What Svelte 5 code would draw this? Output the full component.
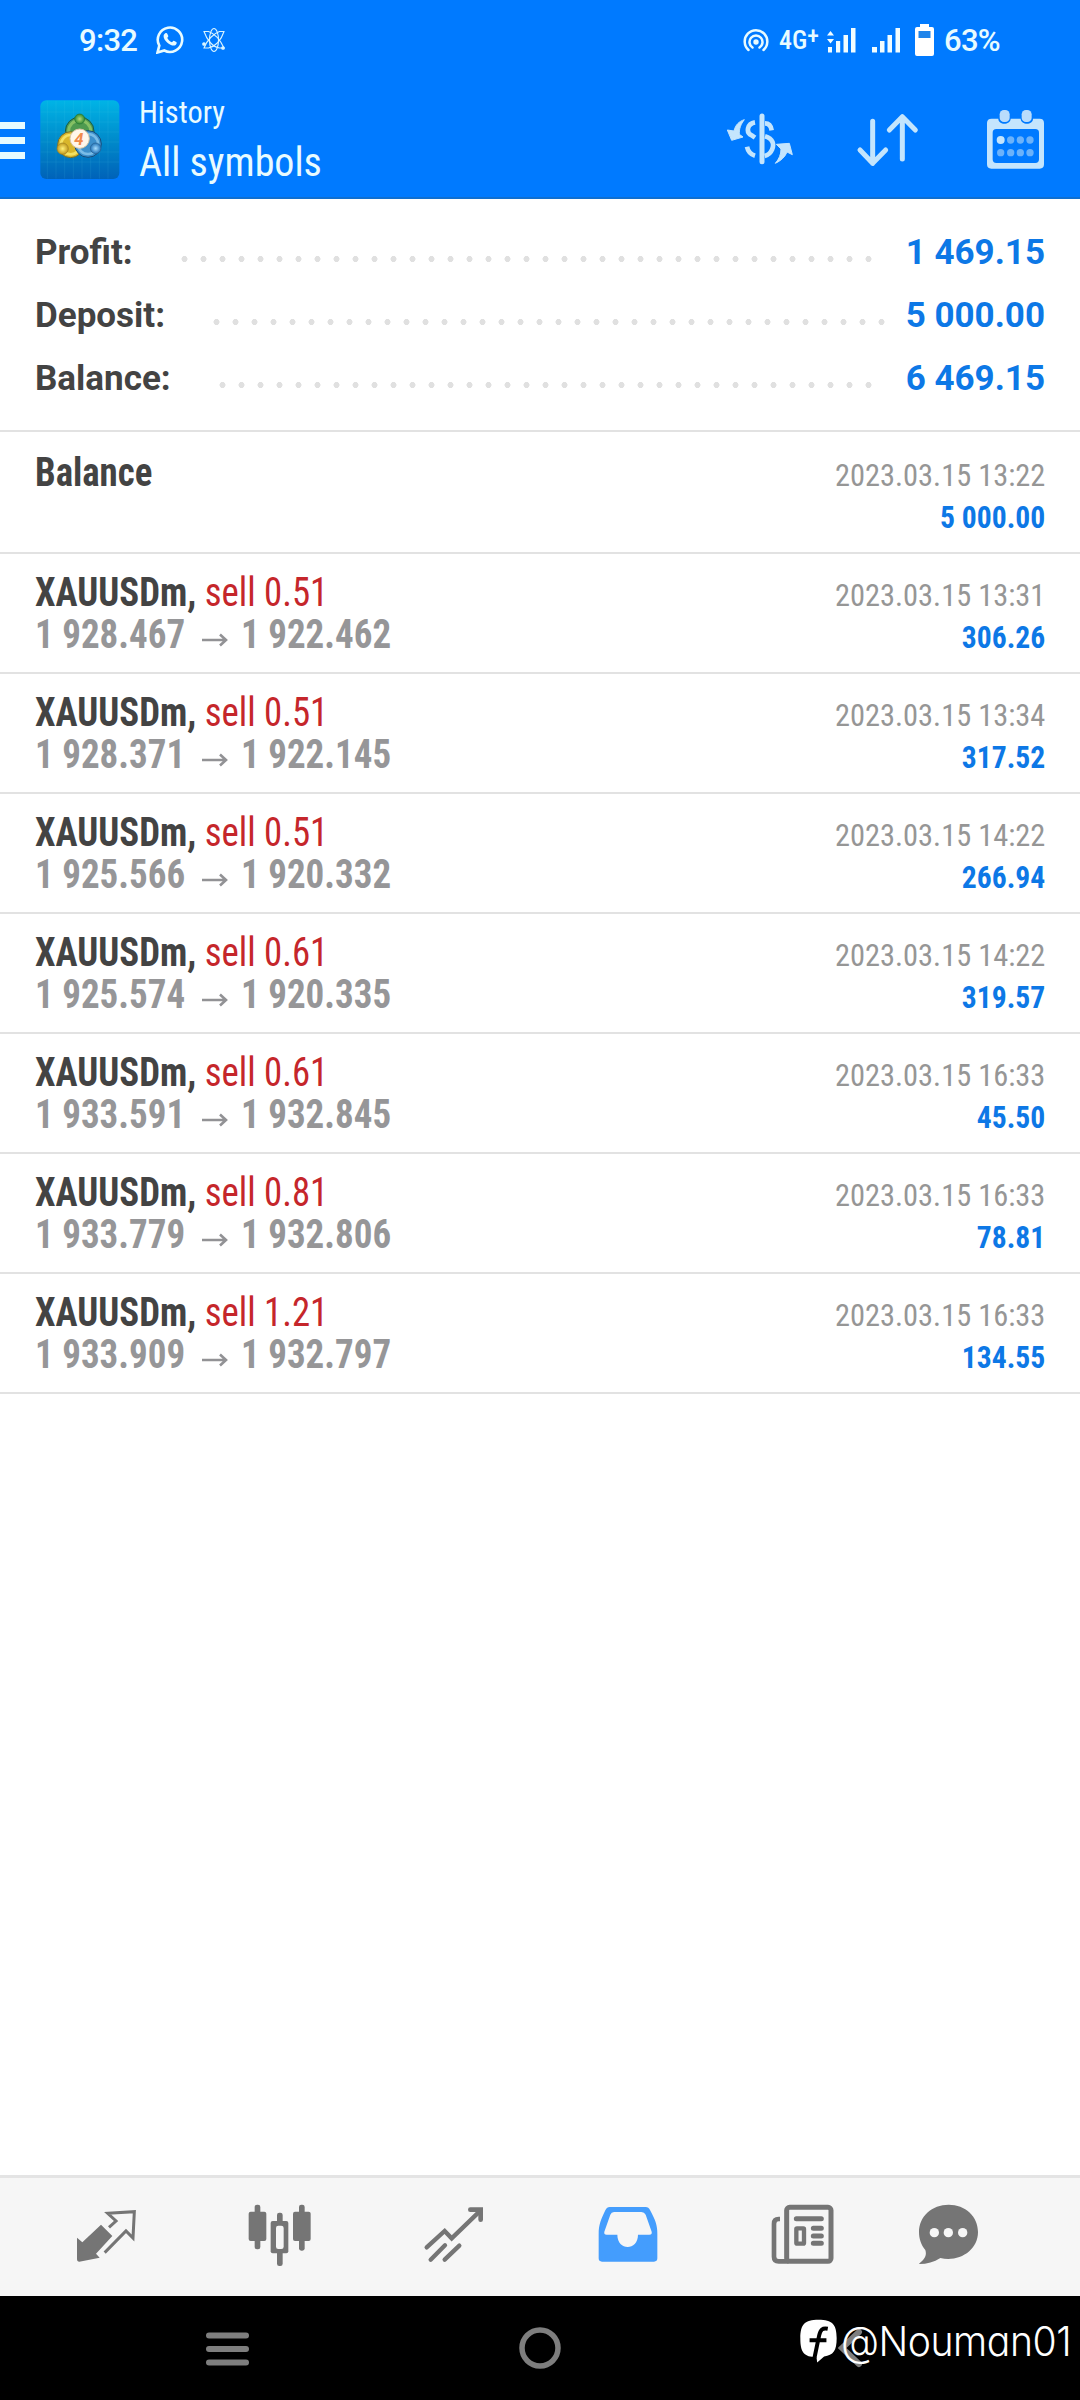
<script>
	const summary = [
		{ label: 'Profit:', value: '1 469.15', dots: 37 },
		{ label: 'Deposit:', value: '5 000.00', dots: 36 },
		{ label: 'Balance:', value: '6 469.15', dots: 35 },
	];

	const deals = [
		{ volume: '0.51', open: '1 928.467', close: '1 922.462', time: '2023.03.15 13:31', profit: '306.26' },
		{ volume: '0.51', open: '1 928.371', close: '1 922.145', time: '2023.03.15 13:34', profit: '317.52' },
		{ volume: '0.51', open: '1 925.566', close: '1 920.332', time: '2023.03.15 14:22', profit: '266.94' },
		{ volume: '0.61', open: '1 925.574', close: '1 920.335', time: '2023.03.15 14:22', profit: '319.57' },
		{ volume: '0.61', open: '1 933.591', close: '1 932.845', time: '2023.03.15 16:33', profit: '45.50' },
		{ volume: '0.81', open: '1 933.779', close: '1 932.806', time: '2023.03.15 16:33', profit: '78.81' },
		{ volume: '1.21', open: '1 933.909', close: '1 932.797', time: '2023.03.15 16:33', profit: '134.55' },
	];
</script>

<div class="screen">
	<header>
		<div class="status">
			<div class="status-side">
				<span class="clock">9:32</span>
				<svg class="whatsapp" viewBox="0 0 28 28" width="28" height="28">
					<path d="M1.500 26.500l1.800-6.900A12.200 12.200 0 1 1 8.300 24.500z" fill="none" stroke="#e8fbff" stroke-width="2.600" />
					<path d="M9 7.500c1-.8 2-.6 2.400.4l.9 2.100c.2.700-.9 1.500-1 2 .9 1.900 2.400 3.300 4.500 4.200.6 0 1.300-1.600 2-1.400l2.500 1.200c1 .6.2 2.500-1 3.200-3.500 1.900-11.800-4.200-11.700-9 0-1.200.7-2.200 1.400-2.700z" fill="#e8fbff" />
				</svg>
				<svg class="atom" viewBox="0 0 24 26" width="24" height="26" fill="none" stroke="#d9f4ff" stroke-width="1.100">
					<ellipse cx="12" cy="13" rx="4.500" ry="11.500" />
					<path d="M2 4.500h4.500c6 2 11.500 8 15.500 16.500h-4.500C11 20 5 13.500 2 4.500z" />
					<path d="M22 4.500h-4.500C11.500 6.500 5 13 2 21h4.500C13 19.500 19 13.500 22 4.500z" />
					<circle cx="2" cy="17" r="1.300" fill="#d9f4ff" />
					<circle cx="21" cy="21" r="1.300" fill="#d9f4ff" />
				</svg>
			</div>
			<div class="status-side">
				<svg viewBox="0 0 26 24" width="26" height="24" fill="none" stroke="#e8fbff" stroke-width="2.500" stroke-linecap="round">
					<circle cx="13" cy="14" r="2.700" fill="#e8fbff" stroke="none" />
					<path d="M9.500 19.500a6.500 6.500 0 1 1 7 0M5.500 22a11.300 11.300 0 1 1 15 0" />
				</svg>
				<span class="network">4G<sup>+</sup></span>
				<svg class="signal" viewBox="0 0 30 26" width="30" height="26" fill="#f2fdff">
					<path d="M1 8.500L4.500 4 8 8.500zM1 12h7l-3.500 4.500zM2 20h4v5.500H2zM10 14h4.200v11.500H10zM17.500 8h4.500v17.500h-4.500zM25 1h4.500v24.500H25z" />
				</svg>
				<svg class="signal-two" viewBox="0 0 30 26" width="30" height="26" fill="#f2fdff">
					<path d="M1 20h5v5.500H1zM9 14h4.500v11.500H9zM16.500 8H21v17.500h-4.500zM24.500 1H29v24.500h-4.500z" />
				</svg>
				<svg class="battery" viewBox="0 0 19 32" width="19" height="32">
					<path d="M5 0h9v3h3a2 2 0 0 1 2 2v25a2 2 0 0 1-2 2H2a2 2 0 0 1-2-2V5a2 2 0 0 1 2-2h3z" fill="#fff" />
					<path d="M3.500 7h12v7h-12z" fill="#1f84ea" />
				</svg>
				<span class="percent">63%</span>
			</div>
		</div>

		<div class="app-bar">
			<svg class="menu" viewBox="0 0 25 38" width="25" height="38" fill="#e6fbff">
				<path d="M0 0h25v7H0zM0 15h25v7H0zM0 30h25v7H0z" />
			</svg>
			<!-- app logo, three coins round the version number -->
			<svg class="logo" viewBox="0 0 240 240" width="80" height="80">
				<defs>
					<linearGradient id="sky" x1="0" y1="0" x2="0" y2="1">
						<stop offset="0" stop-color="#00b4e6" />
						<stop offset="0.5" stop-color="#008bcb" />
						<stop offset="1" stop-color="#0062b8" />
					</linearGradient>
					<radialGradient id="green"><stop offset="0" stop-color="#b9dc78" /><stop offset="1" stop-color="#2f8a35" /></radialGradient>
					<radialGradient id="gold"><stop offset="0" stop-color="#fff07a" /><stop offset="1" stop-color="#c39a1c" /></radialGradient>
					<radialGradient id="blue"><stop offset="0" stop-color="#a5dcff" /><stop offset="1" stop-color="#2273b8" /></radialGradient>
				</defs>
				<rect x="1" y="1" width="237" height="236" rx="18" fill="url(#sky)" />
				<path d="M22 2v234M48 2v234M74 2v234M100 2v234M126 2v234M152 2v234M178 2v234M204 2v234M2 36h236M2 66h236M2 96h236M2 126h236M2 156h236M2 186h236" stroke="#5bd5ef" stroke-opacity="0.160" stroke-width="2" />
				<circle cx="119" cy="94" r="43" fill="#4f9a50" stroke="#155b4a" stroke-width="3" />
				<circle cx="119" cy="94" r="33" fill="none" stroke="#86c064" stroke-width="9" />
				<circle cx="92" cy="134" r="39" fill="#d9b62b" stroke="#736d2b" stroke-width="3" />
				<circle cx="92" cy="134" r="29" fill="none" stroke="#f4e162" stroke-width="8" />
				<circle cx="144" cy="132" r="40" fill="#3d90cc" stroke="#154c7b" stroke-width="3" />
				<circle cx="144" cy="132" r="30" fill="none" stroke="#7abce7" stroke-width="8" />
				<circle cx="119" cy="57" r="15" fill="url(#green)" stroke="#257536" stroke-width="2" />
				<circle cx="68" cy="146" r="17" fill="url(#gold)" stroke="#9c7e25" stroke-width="2" />
				<circle cx="167" cy="145" r="16" fill="url(#blue)" stroke="#285f90" stroke-width="2" />
				<circle cx="119" cy="116" r="29" fill="#fff6ea" stroke="#d9c6a5" stroke-width="3" />
				<text x="117" y="134" class="version">4</text>
			</svg>
			<div class="titles">
				<div class="title">History</div>
				<div class="subtitle">All symbols</div>
			</div>
			<div class="actions">
				<svg viewBox="80 324 198 180" width="66" height="60" fill="none" stroke="#c4e5fd">
					<path d="M185 345v137" stroke-width="15" stroke-linecap="round" />
					<path d="M164 364c-24 4-28 31-10 39l10 7M194 367c10 0 18 7 20 21M140 437c3 14 11 23 24 27M194 406c25 7 28 25 21 40-4 10-11 16-22 19" stroke-width="14" />
					<path d="M132 356c-16 5-27 16-31 34l-20-3 13 31 34-10-11-8c-1-18 5-31 15-44z" fill="#c4e5fd" stroke-width="3" />
					<path d="M225 487c15-7 29-18 35-34l16 8-9-34-39 3 14 14c0 17-6 30-17 43z" fill="#c4e5fd" stroke-width="3" />
				</svg>
				<svg viewBox="465 324 198 180" width="66" height="60" fill="none" stroke="#c4e5fd" stroke-width="15" stroke-linecap="round" stroke-linejoin="round">
					<path d="M518 361v126M480 447l38 40 39-40M607 474V347M568 387l39-40 39 40" />
				</svg>
				<svg viewBox="850 324 198 180" width="66" height="60">
					<path fill-rule="evenodd" d="M876 353h20c0 20 36 20 37 0h30c1 20 37 20 37 0h20q13 0 13 13v124q0 13-13 13H875q-13 0-13-13V366q0-13 14-13zM890 384q-11 0-11 11v80q0 11 11 11h117q11 0 11-11v-80q0-11-11-11z" fill="#c4e5fd" />
					<rect x="900" y="327" width="30" height="36" rx="13" fill="#b9dcfc" />
					<rect x="966" y="327" width="30" height="36" rx="13" fill="#b9dcfc" />
					<circle cx="903" cy="417" r="12" fill="#c4e5fd" />
					<g fill="#6bb2fa">
						<circle cx="933" cy="417" r="11" /><circle cx="962" cy="417" r="11" /><circle cx="991" cy="417" r="11" />
						<circle cx="903" cy="455" r="11" /><circle cx="933" cy="455" r="11" /><circle cx="962" cy="455" r="11" /><circle cx="991" cy="455" r="11" />
					</g>
				</svg>
			</div>
		</div>
	</header>

	<section class="summary">
		{#each summary as item}
			<div class="summary-row">
				<span class="label">{item.label}</span>
				<span class="dots" style="width: {item.dots * 19}px"></span>
				<span class="total">{item.value}</span>
			</div>
		{/each}
	</section>

	<main>
		<div class="deal deposit">
			<div class="symbol">Balance</div>
			<div class="right">
				<div class="time">2023.03.15 13:22</div>
				<div class="profit">5 000.00</div>
			</div>
		</div>
		{#each deals as deal}
			<div class="deal">
				<div>
					<div class="symbol">XAUUSDm, <span class="sell">sell {deal.volume}</span></div>
					<div class="prices">
						<span class="open">{deal.open}</span>
						<svg viewBox="0 0 26 14" width="26" height="14" fill="none" stroke="#929295" stroke-width="2.600">
							<path d="M0 7h24M18 1.500l6 5.500-6 5.500" />
						</svg>
						<span>{deal.close}</span>
					</div>
				</div>
				<div class="right">
					<div class="time">{deal.time}</div>
					<div class="profit">{deal.profit}</div>
				</div>
			</div>
		{/each}
	</main>

	<nav class="tabs">
		<svg viewBox="219 132 198 192" width="66" height="64">
			<path d="M303 194l34 34-49 53 11 12-61 12q-7 0-7-8v-64l16 14z" fill="#757575" />
			<path d="M327 202l21-19-25-23 80-5-4 79-21-21-64 65" fill="none" stroke="#757575" stroke-width="9" />
		</svg>
		<svg viewBox="741 132 198 192" width="66" height="64" fill="#757575">
			<rect x="764" y="134" width="17" height="134" rx="7" />
			<rect x="746" y="155" width="53" height="88" rx="6" />
			<rect x="897" y="134" width="17" height="138" rx="7" />
			<rect x="879" y="155" width="53" height="88" rx="6" />
			<rect x="831" y="158" width="17" height="160" rx="7" />
			<rect x="812" y="183" width="53" height="97" rx="6" />
			<rect x="828" y="197" width="23" height="70" rx="7" fill="#f6f6f6" />
		</svg>
		<svg viewBox="183 132 198 192" width="66" height="64" fill="none" stroke="#757575" stroke-width="13" stroke-linecap="round">
			<path d="M200 262l54-49 21 22 87-84M212 299l43-43M254 299l44-42" />
			<path d="M331 149h31v30" stroke-width="14" />
		</svg>
		<svg viewBox="705 132 198 192" width="66" height="64">
			<path d="M749 141h108q9 0 13 9c16 30 22 45 22 71v74q0 10-10 10H726q-10 0-10-10v-74c0-26 7-43 20-70q5-10 13-10z" fill="#449dfd" />
			<path d="M762 156h82q9 0 13 8l18 51q2 9-7 9h-34c0 49-62 49-62 0h-32q-9 0-7-9l18-51q3-8 11-8z" fill="#f6f6f6" />
		</svg>
		<svg viewBox="147 132 198 192" width="66" height="64" fill="none" stroke="#757575" stroke-width="15">
			<rect x="200" y="142" width="133" height="162" rx="9" />
			<path d="M180 177h-4q-14 0-14 14v99q0 14 14 14h30" stroke-width="14" />
			<path d="M229 176h75M280 205h24M280 228h24M280 250h24" stroke-linecap="round" />
			<rect x="229" y="205" width="23" height="46" rx="2" stroke-width="13" />
		</svg>
		<svg class="chat" viewBox="588 132 198 192" width="66" height="64">
			<path d="M686 134c50 0 88 35 88 82 0 56-57 91-113 78-19 12-40 18-63 18-3-3 27-15 18-42-13-16-19-33-19-54 0-47 39-82 89-82z" fill="#757575" />
			<circle cx="643" cy="218" r="14" fill="#f6f6f6" />
			<circle cx="685" cy="218" r="14" fill="#f6f6f6" />
			<circle cx="728" cy="218" r="14" fill="#f6f6f6" />
		</svg>
	</nav>

	<footer>
		<svg class="recents" viewBox="0 0 43 34" width="43" height="34" fill="#7e7e7e">
			<rect y="0.500" width="43" height="6" rx="3" />
			<rect y="14" width="43" height="6" rx="3" />
			<rect y="27.500" width="43" height="6" rx="3" />
		</svg>
		<svg class="home" viewBox="0 0 42 42" width="42" height="42">
			<circle cx="21" cy="21" r="18" fill="none" stroke="#7e7e7e" stroke-width="5.500" />
		</svg>
		<svg class="back" viewBox="0 0 26 40" width="26" height="40">
			<path d="M21 4L4 20l17 16" fill="none" stroke="#7e7e7e" stroke-width="6" stroke-linecap="round" />
		</svg>
		<div class="watermark">
			<svg viewBox="240 484 112 132" width="37" height="44">
				<path d="M296 486c42 0 55 14 55 56 0 38-10 51-38 55l-21 18-2-16c-38 0-49-14-49-57 0-42 13-56 55-56z" fill="#fff" />
				<path d="M284 600l14-67c4-18 10-23 26-20M269 548h51" fill="none" stroke="#000" stroke-width="12" />
			</svg>
			<span>@Nouman01</span>
		</div>
	</footer>
</div>

<style>
	:global(body) {
		margin: 0;
		background: #fff;
	}
	.screen {
		width: 1080px;
		height: 2400px;
		display: flex;
		flex-direction: column;
		font-family: Roboto, sans-serif;
		white-space: nowrap;
		overflow: hidden;
	}
	svg {
		display: block;
		flex: none;
	}
	header {
		box-sizing: border-box;
		height: 199px;
		background: #007aff;
		border-bottom: 2px solid #0f6fd0;
		color: #e8fbff;
	}
	.status {
		height: 80px;
		padding: 0 81px 0 79px;
		display: flex;
		justify-content: space-between;
		font-size: 31px;
		font-weight: 500;
		letter-spacing: -0.700px;
	}
	.status-side {
		display: flex;
		align-items: center;
	}
	.clock {
		width: 77px;
	}
	.atom {
		margin-left: 18px;
	}
	.network {
		width: 41px;
		margin-left: 10px;
		font-size: 26px;
		font-stretch: 75%;
		letter-spacing: 0;
	}
	.network sup {
		font-size: 24px;
		line-height: 0;
		vertical-align: 5px;
	}
	.signal {
		margin-left: 6px;
	}
	.signal-two {
		margin-left: 15px;
	}
	.battery {
		margin-left: 14px;
	}
	.percent {
		width: 55px;
		margin-left: 10px;
	}
	.app-bar {
		height: 117px;
		display: flex;
		align-items: center;
	}
	.menu {
		margin-top: 4px;
	}
	.logo {
		margin: 3px 19px 0 15px;
	}
	.version {
		font: italic 700 50px Roboto, sans-serif;
		fill: #f08a4b;
		text-anchor: middle;
	}
	.titles {
		font-stretch: 75%;
	}
	.title {
		font-size: 32px;
		line-height: 44px;
		transform: scaleX(0.95);
		transform-origin: left;
	}
	.subtitle {
		margin-top: 4px;
		font-size: 40px;
		line-height: 50px;
	}
	.actions {
		margin-left: auto;
		padding-right: 31px;
		display: flex;
		gap: 62px;
	}
	.summary {
		padding: 22px 35px 20px;
		border-bottom: 2px solid #e2e2e2;
	}
	.summary-row {
		height: 63px;
		display: flex;
		font-size: 35px;
		line-height: 63px;
		font-weight: 700;
	}
	.label {
		color: #434343;
	}
	.dots {
		height: 6px;
		margin: 35px 0 0 42px;
		background: radial-gradient(circle, #e0e0e0 2.700px, transparent 3.300px) 0 0 / 19px 6px repeat-x;
	}
	.total {
		margin-left: auto;
		color: #0d78e6;
	}
	.deal {
		box-sizing: border-box;
		height: 120px;
		padding: 18px 35px 0;
		border-bottom: 2px solid #e2e2e2;
		display: flex;
		justify-content: space-between;
		font-stretch: 75%;
	}
	.deposit {
		height: 122px;
		padding-top: 20px;
	}
	/* the list face is a little narrower than Roboto at 75% */
	.symbol {
		font-size: 40px;
		line-height: 42px;
		font-weight: 700;
		color: #434343;
		transform: scaleX(0.92);
		transform-origin: left;
	}
	.sell {
		font-weight: 400;
		color: #c5262b;
	}
	.prices {
		display: flex;
		align-items: center;
		font-size: 40px;
		line-height: 42px;
		font-weight: 700;
		color: #969698;
	}
	.prices span {
		transform: scaleX(0.925);
		transform-origin: left;
	}
	.open {
		width: 167px;
	}
	.prices svg {
		margin: 10px 13px 0 0;
	}
	.right {
		padding-top: 2px;
		text-align: right;
		font-size: 32px;
		line-height: 42px;
	}
	.time {
		color: #969696;
		transform: scaleX(0.95);
		transform-origin: right;
	}
	.profit {
		font-weight: 700;
		color: #0d78e6;
		transform: scaleX(0.925);
		transform-origin: right;
	}
	.tabs {
		box-sizing: border-box;
		height: 121px;
		margin-top: auto;
		padding: 26px 0 0 73px;
		background: #f6f6f6;
		border-top: 3px solid #e4e4e4;
		display: flex;
		gap: 108px;
	}
	.chat {
		margin-left: -27px;
	}
	footer {
		position: relative;
		height: 104px;
		background: #000;
		display: flex;
		align-items: center;
	}
	.recents {
		margin: 2px 0 0 206px;
	}
	.home {
		margin-left: 270px;
	}
	.back {
		margin-left: 277px;
	}
	.watermark {
		position: absolute;
		left: 800px;
		top: 20px;
		display: flex;
		align-items: center;
		gap: 4px;
		font-family: Inter, sans-serif;
		font-size: 41px;
		font-weight: 300;
		font-feature-settings: "cv11";
		letter-spacing: -0.500px;
		color: #fff;
	}
	.watermark span {
		width: 236px;
		transform: scaleX(0.955);
		transform-origin: left;
	}
</style>
